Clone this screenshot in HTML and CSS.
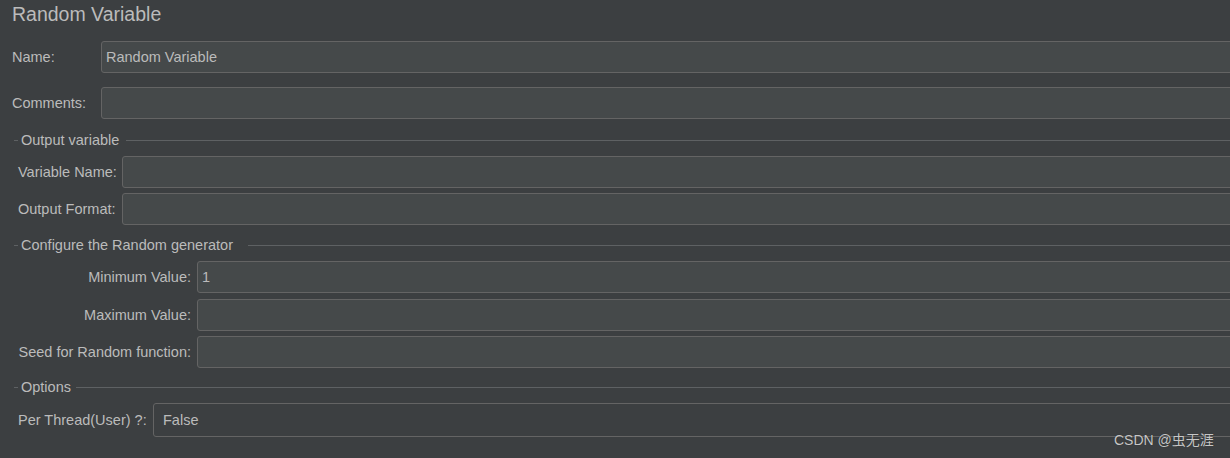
FILE: index.html
```html
<!DOCTYPE html>
<html>
<head>
<meta charset="utf-8">
<link rel="stylesheet" href="styles.css">
</head>
<body>
<div class="page">
  <div class="title">Random Variable</div>
  <div class="top">
    <div class="row">
      <span class="label label-top">Name:</span>
      <div class="field">Random Variable</div>
    </div>
    <div class="row row-comments">
      <span class="label label-top">Comments:</span>
      <div class="field"></div>
    </div>
  </div>

  <div class="section sec-output">
    <div class="legend"><span class="dash"></span><span class="legend-text gap-output">Output variable</span><span class="rule"></span></div>
    <div class="rows">
      <div class="row">
        <span class="label label-out">Variable Name:</span>
        <div class="field"></div>
      </div>
      <div class="row">
        <span class="label label-out">Output Format:</span>
        <div class="field"></div>
      </div>
    </div>
  </div>

  <div class="section sec-random">
    <div class="legend"><span class="dash"></span><span class="legend-text gap-random">Configure the Random generator</span><span class="rule"></span></div>
    <div class="rows rows-random">
      <div class="row">
        <span class="label label-rand">Minimum Value:</span>
        <div class="field field-num">1</div>
      </div>
      <div class="row">
        <span class="label label-rand">Maximum Value:</span>
        <div class="field"></div>
      </div>
      <div class="row row-seed">
        <span class="label label-rand">Seed for Random function:</span>
        <div class="field"></div>
      </div>
    </div>
  </div>

  <div class="section sec-options">
    <div class="legend"><span class="dash"></span><span class="legend-text gap-options">Options</span><span class="rule"></span></div>
    <div class="rows">
      <div class="row">
        <span class="label label-opt">Per Thread(User) ?:</span>
        <div class="field field-combo">False</div>
      </div>
    </div>
  </div>
</div>
<div class="watermark">CSDN @虫无涯</div>
</body>
</html>
```

FILE: styles.css
```css
html, body {
  margin: 0;
  padding: 0;
  background: #3c3f41;
  overflow: hidden;
  width: 1230px;
  height: 458px;
}

body {
  font-family: "Liberation Sans", Arial, "Noto Sans CJK SC", sans-serif;
  font-size: 14.5px;
  color: #bbbbbb;
  position: relative;
}

.page {
  width: 1260px;
}

.title {
  font-size: 19.5px;
  line-height: 29px;
  height: 29px;
  padding-left: 12px;
  color: #bbbbbb;
}

.top {
  padding-left: 12px;
  margin-top: 12px;
}

.row {
  display: flex;
  align-items: center;
}

.row-comments {
  margin-top: 14px;
}

.label {
  flex: none;
  white-space: nowrap;
}

.label-top { width: 89px; }
.label-out { width: 104px; }
.label-rand { width: 173px; text-align: right; padding-right: 6px; }
.label-opt { width: 135px; }

.field {
  flex: 1;
  box-sizing: border-box;
  height: 32px;
  line-height: 30px;
  background: #45494a;
  border: 1px solid #646464;
  border-radius: 3px;
  padding: 0 4px;
  color: #bbbbbb;
  white-space: nowrap;
}

.field-num { padding-left: 4px; }

.field-combo {
  height: 34px;
  line-height: 32px;
  padding-left: 9px;
  background: #3c3f41;
}

.section {
  padding-left: 14px;
}

.legend {
  display: flex;
  align-items: center;
  height: 20px;
}

.dash {
  flex: none;
  width: 4px;
  height: 1px;
  background: #5e6163;
}

.legend-text {
  flex: none;
  padding-left: 3px;
  line-height: 20px;
  white-space: nowrap;
}

.gap-output { padding-right: 7px; }
.gap-random { padding-right: 15px; }
.gap-options { padding-right: 5px; }

.rule {
  flex: 1;
  height: 1px;
  background: #5e6163;
}

.rows {
  padding-left: 4px;
  display: flex;
  flex-direction: column;
  gap: 5px;
}

.rows-random {
  gap: 6px;
}

.row-seed {
  margin-top: -1px;
}

.sec-output { margin-top: 11px; }
.sec-output .rows { margin-top: 6px; }

.sec-random { margin-top: 10px; }
.sec-random .rows { margin-top: 6px; }

.sec-options { margin-top: 9px; }
.sec-options .rows { margin-top: 6px; }

.watermark {
  position: absolute;
  left: 1114px;
  top: 431px;
  font-size: 14px;
  line-height: 18px;
  color: #c6c6c6;
  white-space: nowrap;
  text-shadow: 0 0 1px rgba(0,0,0,0.4);
}
```
